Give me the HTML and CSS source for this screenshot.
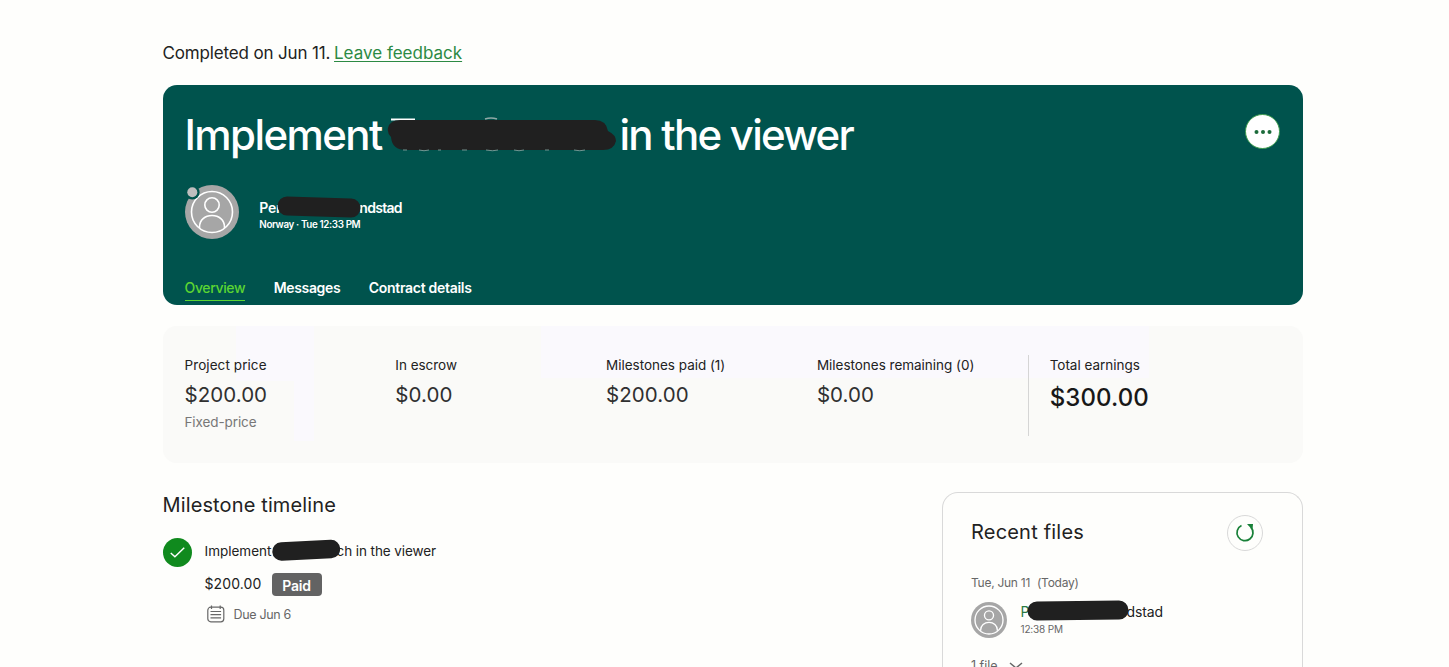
FILE: index.html
```html
<!DOCTYPE html>
<html lang="en">
<head>
<meta charset="utf-8">
<title>Contract overview</title>
<link rel="stylesheet" href="styles.css">
</head>
<body>
<main class="page">
  <p class="notice"><span class="notice-text">Completed on Jun 11.</span><a class="link" href="#">Leave feedback</a></p>

  <header class="hero">
    <div class="hero-top">
      <h1 class="title"><span class="title-a">Implement</span><span class="title-gap"><svg class="title-mask" viewBox="0 0 230 36" width="230" height="36"><path d="M4 3.500h24" stroke="#fff" stroke-width="2"/><path d="M98 3q6-2 12 0" stroke="#8fa9a6" stroke-width="1.500" fill="none"/><path d="M13 4H208Q219 4 221 15Q229 19 229 25Q227 34 216 34H19Q5 34 4 21Q0 17 1 12Q3 4 13 4Z" fill="#202020"/><path d="M16 34h4M32 34q5 1.500 10 0M51 34h3M75 34h5M99 34q7 1.500 12 0M127 34q5 1.500 10 0M158 34h4M187 34q6 1.500 11 0" stroke="#7f9c99" stroke-width=".9" fill="none"/></svg></span><span class="title-b">in the viewer</span></h1>
      <button class="more" aria-label="More options"><svg width="18" height="6" viewBox="0 0 18 6" fill="#1c6b3a"><circle cx="2.500" cy="3" r="2"/><circle cx="9" cy="3" r="2"/><circle cx="15.500" cy="3" r="2"/></svg></button>
    </div>
    <div class="client">
      <svg class="avatar" width="54" height="54" viewBox="0 0 54 54"><circle cx="27" cy="27" r="27" fill="#a6a6a6"/><g fill="none" stroke="#fff" stroke-width="1.600"><circle cx="27" cy="27" r="20.500"/><circle cx="27" cy="20" r="7.200"/><path d="M14.500 43v-1c0-7 5.500-11.500 12.500-11.500s12.500 4.500 12.500 11.500v1"/></g><circle cx="7.300" cy="7.300" r="7.300" fill="#00534d"/><circle cx="7.300" cy="7.300" r="5" fill="#bebebe"/></svg>
      <div class="client-text">
        <div class="client-name"><span class="cn-a">Per</span><span class="cn-gap"><svg class="cn-mask" width="86" height="24" viewBox="0 0 86 24"><path d="M11 11L75 13" stroke="#202020" stroke-width="19" stroke-linecap="round"/></svg></span><span class="cn-b">ndstad</span></div>
        <div class="client-meta">Norway · Tue 12:33 PM</div>
      </div>
    </div>
    <nav class="tabs"><a class="tab tab-on">Overview</a><a class="tab">Messages</a><a class="tab tab-con">Contract details</a></nav>
  </header>

  <section class="stats">
    <div class="stat"><div class="label l-project">Project price</div><div class="value">$200.00</div><div class="sub">Fixed-price</div></div>
    <div class="stat"><div class="label">In escrow</div><div class="value">$0.00</div></div>
    <div class="stat"><div class="label">Milestones paid (1)</div><div class="value">$200.00</div></div>
    <div class="stat"><div class="label">Milestones remaining (0)</div><div class="value">$0.00</div></div>
    <div class="stat total"><div class="label">Total earnings</div><div class="value value-lg">$300.00</div></div>
  </section>

  <div class="columns">
    <section class="timeline">
      <h2 class="heading h-time">Milestone timeline</h2>
      <div class="milestone">
        <svg class="check" width="29" height="29" viewBox="0 0 28 28"><circle cx="14" cy="14" r="14" fill="#108a1e"/><path d="M7.500 14.500l4 3.700L20.500 9.500" fill="none" stroke="#fff" stroke-width="1.400"/></svg>
        <div class="m-body">
          <div class="m-name"><span class="mn-a">Implement</span><span class="mn-gap"><svg class="mn-mask" width="70" height="24" viewBox="0 0 70 24"><path d="M10.500 12.500L60 10" stroke="#202020" stroke-width="18.500" stroke-linecap="round"/></svg></span><span class="mn-b">ch in the viewer</span></div>
          <div class="m-pay"><span class="m-amount">$200.00</span><span class="badge">Paid</span></div>
          <div class="m-due"><svg width="18" height="18" viewBox="0 0 18 18" fill="none" stroke="#676767" stroke-width="1.200"><rect x=".8" y="2.200" width="16" height="14.600" rx="3"/><path d="M4.500 .5v3.500M13.200 .5v3.500M3.500 6.500h10.600M3.500 9.700h10.600M3.500 12.900h10.600"/></svg><span class="due-text">Due Jun 6</span></div>
        </div>
      </div>
    </section>

    <aside class="files">
      <div class="files-head">
        <h2 class="heading h-files">Recent files</h2>
        <button class="refresh" aria-label="Refresh"><svg width="20" height="20" viewBox="0 0 20 20"><path d="M6.500 2.500A8 8 0 1 0 15.800 4.200" fill="none" stroke="#188038" stroke-width="1.700"/><path d="M12 1h6l-.5 6z" fill="#188038"/></svg></button>
      </div>
      <div class="date"><span>Tue, Jun 11</span><span>(Today)</span></div>
      <div class="sender">
        <svg width="36" height="36" viewBox="0 0 54 54"><circle cx="27" cy="27" r="27" fill="#a6a6a6"/><g fill="none" stroke="#fff" stroke-width="2"><circle cx="27" cy="27" r="21"/><circle cx="27" cy="20" r="6.800"/><path d="M14.500 43v-1c0-7 5.500-11.500 12.500-11.500s12.500 4.500 12.500 11.500v1"/></g></svg>
        <div class="sender-text">
          <div class="sender-name"><span class="sn-a">P</span><span class="sn-gap"><svg class="sn-mask" width="104" height="24" viewBox="0 0 104 24"><path d="M11 12L93 11" stroke="#202020" stroke-width="19" stroke-linecap="round"/></svg></span><span class="sn-b">dstad</span></div>
          <div class="sender-time">12:38 PM</div>
        </div>
      </div>
      <div class="count"><span>1 file</span><svg width="14" height="9" viewBox="0 0 14 9" fill="none" stroke="#676767" stroke-width="1.500"><path d="M1 2l6 5 6-5"/></svg></div>
    </aside>
  </div>
</main>
</body>
</html>
```

FILE: styles.css
```css
* { box-sizing: border-box; }
html { height: 100%; overflow: hidden; }
body { margin: 0; height: 667px; overflow: hidden; background: #fefefc; color: #222; font-family: Inter, "Liberation Sans", sans-serif; font-size: 14px; white-space: nowrap; }
h1, h2, p { margin: 0; font-weight: 400; }
button { padding: 0; cursor: pointer; }

.page { width: 1140.500px; margin-left: 162.500px; padding-top: 40.500px; }
.notice { display: flex; height: 24px; line-height: 25px; font-size: 17px; letter-spacing: -.15px; }
.notice-text { width: 171.500px; }
.link { color: #2c8a44; text-decoration: underline; text-underline-offset: 2px; text-decoration-thickness: 1px; letter-spacing: 0; }

.hero { display: flex; flex-direction: column; height: 220px; margin-top: 20px; padding: 21.500px 23px 0 22px; border-radius: 14px; background: #00534d; color: #fff; }
.hero-top { display: flex; justify-content: space-between; height: 58px; }
.title { display: flex; height: 58px; line-height: 57px; font-size: 42px; font-weight: 500; letter-spacing: -1.600px; }
.title-a { width: 202px; }
.title-gap { position: relative; width: 233px; }
.title-mask { position: absolute; left: 0; top: 9.500px; }
.title-b { letter-spacing: -1.750px; }
.more { display: flex; align-items: center; justify-content: center; width: 35px; height: 35px; margin-top: 8px; border: 1px solid #3a9a4c; border-radius: 50%; background: #fff; }

.client { display: flex; gap: 20px; height: 54px; margin-top: 20.500px; }
.client-text { padding: 13px 0 0 .8px; }
.client-name { display: flex; height: 20px; line-height: 20px; font-size: 14px; font-weight: 600; letter-spacing: -.3px; }
.cn-a { width: 24px; }
.cn-gap { position: relative; width: 76px; }
.cn-mask { position: absolute; left: -7px; top: -3px; }
.cn-b { letter-spacing: -.7px; }
.client-meta { height: 14px; line-height: 14px; font-size: 9.800px; font-weight: 600; letter-spacing: -.36px; }

.tabs { display: flex; gap: 28.500px; margin-top: 37px; }
.tab { height: 25px; line-height: 23px; font-size: 14px; font-weight: 600; letter-spacing: -.35px; }
.tab-on { color: #5bd532; border-bottom: 1.500px solid #5bd532; font-weight: 500; }
.tab-con { letter-spacing: -.3px; }

/* Faint lavender tints sit over the grey panel */
.stats { display: flex; height: 137px; margin-top: 21px; padding: 29px 22px; border-radius: 14px;
  background: linear-gradient(#faf9fd, #faf9fd) 73px 0 / 78px 55px no-repeat, linear-gradient(#faf9fd, #faf9fd) 131px 55px / 20px 60px no-repeat, linear-gradient(#faf9fd, #faf9fd) 378px 0 / 608px 52px no-repeat, #fafaf8; }
.stat { width: 210.800px; }
.total { width: 250px; height: 81px; padding-left: 21px; border-left: 1px solid #d5d5d5; }
.label { height: 20px; line-height: 20px; font-size: 13.500px; letter-spacing: -.02px; }
.l-project { letter-spacing: .08px; }
.value { height: 30px; margin-top: 5px; line-height: 30px; font-size: 20.500px; letter-spacing: .05px; color: #303030; }
.value-lg { margin-top: 8px; font-size: 24px; font-weight: 500; color: #181818; letter-spacing: .1px; }
.sub { margin-top: 2px; line-height: 20px; font-size: 13.500px; color: #777; letter-spacing: -.1px; }

.columns { display: flex; justify-content: space-between; margin-top: 29.500px; }
.timeline { width: 500px; }
.heading { height: 28px; line-height: 28px; font-size: 20px; }
.h-time { margin-top: -1px; letter-spacing: .13px; }
.milestone { display: flex; gap: 13px; margin-top: 19px; }
.m-name { display: flex; height: 24px; padding-top: 1px; line-height: 25px; font-size: 13.500px; letter-spacing: 0; }
.mn-a { width: 68px; }
.mn-gap { position: relative; width: 64px; }
.mn-mask { position: absolute; left: -2px; top: 0; }
.mn-b { letter-spacing: -.08px; }
.m-pay { display: flex; align-items: center; height: 24px; margin-top: 9px; }
.m-amount { width: 67px; padding-top: 1px; line-height: 24px; font-size: 14px; letter-spacing: .1px; }
.badge { width: 50px; height: 23px; margin-top: 2px; line-height: 25px; border-radius: 4px; background: #636363; color: #fff; text-align: center; font-weight: 600; font-size: 14px; letter-spacing: -.2px; }
.m-due { display: flex; align-items: center; gap: 8px; height: 20px; margin-top: 9px; padding-left: 2px; color: #676767; font-size: 12.500px; }
.due-text { padding: 1px 0 0 1px; letter-spacing: -.33px; }

.files { width: 361px; height: 175px; border: 1px solid #d9d9d9; border-bottom: 0; border-radius: 16px 16px 0 0; padding: 22px 39px 0 28px; }
.files-head { display: flex; justify-content: space-between; height: 36px; }
.h-files { margin-top: 3px; letter-spacing: .2px; }
.refresh { display: flex; align-items: center; justify-content: center; width: 36px; height: 36px; border: 1px solid #d9d9d9; border-radius: 50%; background: transparent; }
.date { display: flex; gap: 7px; height: 20px; margin-top: 22px; line-height: 20px; font-size: 12px; color: #676767; letter-spacing: -.27px; }
.sender { display: flex; gap: 13.500px; margin-top: 9px; }
.sender-name { display: flex; height: 20px; line-height: 20px; font-size: 14px; }
.sn-a { width: 8px; color: #2c7a42; }
.sn-gap { position: relative; width: 98px; }
.sn-mask { position: absolute; left: -2.500px; top: -3px; }
.sn-b { letter-spacing: -.1px; }
.sender-time { line-height: 14px; font-size: 10px; color: #676767; letter-spacing: -.15px; }
.count { display: flex; align-items: center; gap: 11px; height: 20px; margin-top: 17px; color: #676767; font-size: 12.500px; }
```
